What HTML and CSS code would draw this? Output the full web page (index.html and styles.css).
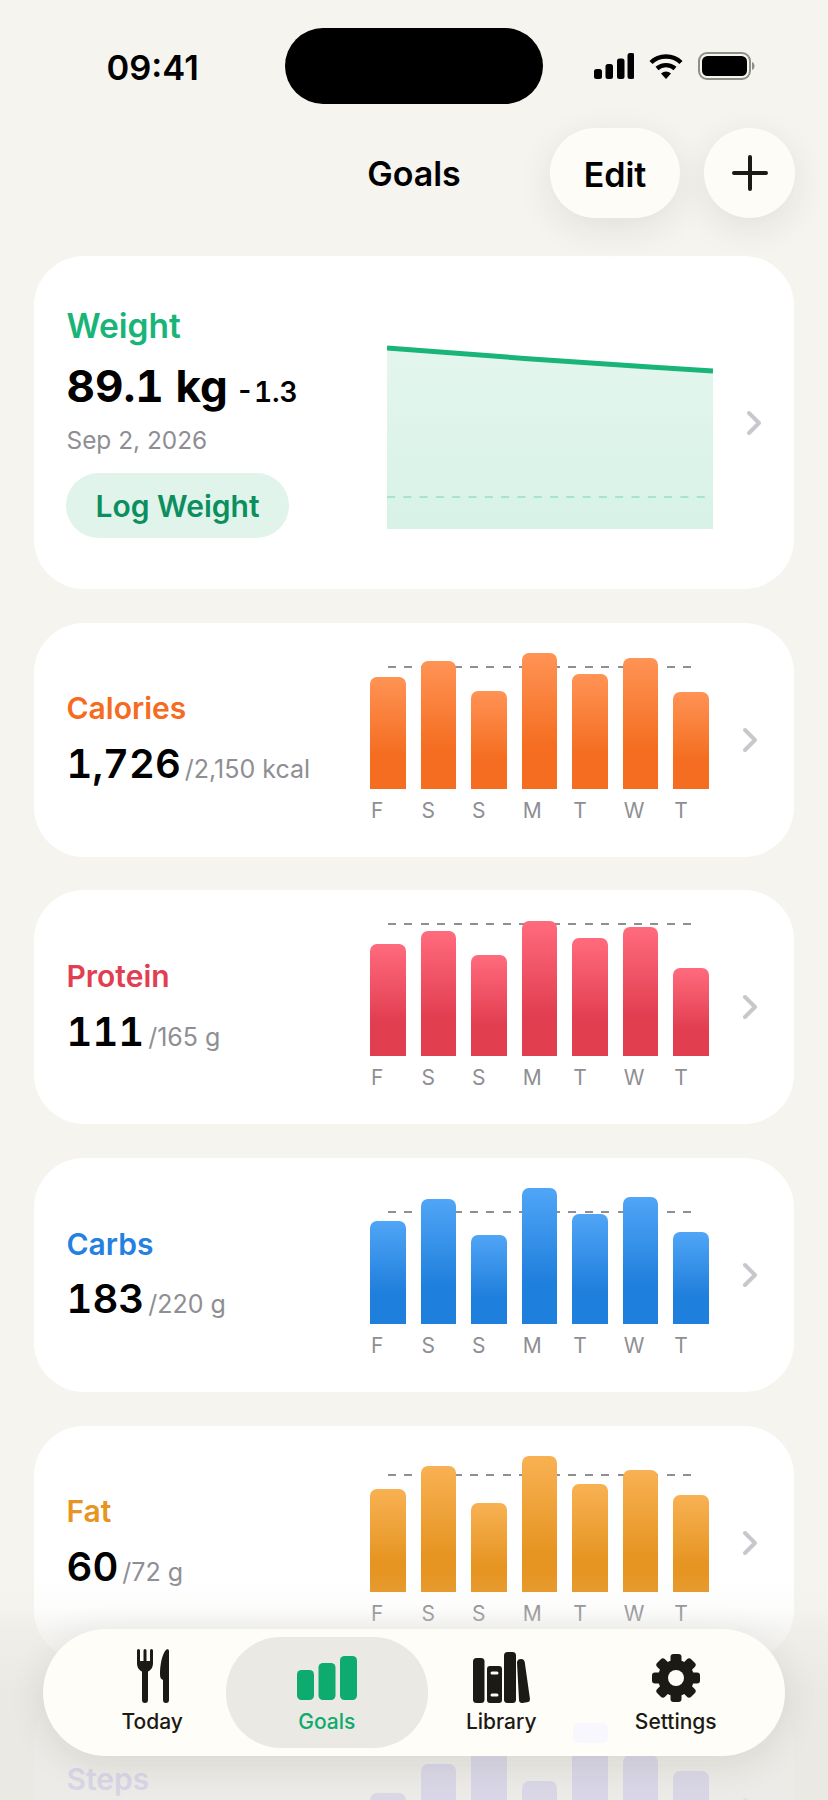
FILE: index.html
```html
<!DOCTYPE html>
<html lang="en">
<head>
<meta charset="utf-8">
<title>Goals</title>
<link rel="stylesheet" href="styles.css">
</head>
<body>
<div class="phone">
  <div class="status">
    <div class="time">09:41</div>
    <div class="island"></div>
    <div class="sys">
      <svg class="signal" width="40" height="26" viewBox="0 0 40 26"><rect x="0" y="16" width="8" height="10" rx="2.5"/><rect x="11.5" y="11" width="7.5" height="15" rx="2.5"/><rect x="23" y="5.5" width="7.5" height="20.5" rx="2.5"/><rect x="33.5" y="0" width="7" height="26" rx="2.5"/></svg>
      <svg class="wifi" width="34" height="26" viewBox="0 0 34 26"><path class="arc" d="M2 9.5C10 1.5 24 1.5 32 9.5"/><path class="arc" d="M8 15.5C13 11 21 11 26 15.5"/><path d="M12 20.5C15 17.8 19 17.8 22 20.5L17 26Z"/></svg>
      <svg class="battery" width="57" height="28" viewBox="0 0 57 28"><rect class="shell" x="1" y="1" width="51" height="26" rx="8"/><rect x="4" y="4" width="45" height="20" rx="5.5"/><path class="cap" d="M54 10C56 11 56.5 12.5 56.5 14S56 17 54 18Z"/></svg>
    </div>
  </div>

  <header class="top">
    <div></div>
    <h1 class="title">Goals</h1>
    <div class="actions">
      <button class="pill-btn">Edit</button>
      <button class="round-btn"><svg width="36" height="36" viewBox="0 0 36 36"><path d="M18 2V34M2 18H34"/></svg></button>
    </div>
  </header>

  <main class="list">
    <section class="card card-weight">
      <div class="w-left">
        <div class="label label-w c-green">Weight</div>
        <div class="w-value"><span class="big">89.1 kg</span><span class="delta">-1.3</span></div>
        <div class="date">Sep 2, 2026</div>
        <button class="log-btn">Log Weight</button>
      </div>
      <svg class="w-chart" width="326" height="190" viewBox="0 0 326 190">
        <defs><linearGradient id="wfill" x1="0" y1="0" x2="0" y2="1"><stop offset="0" stop-color="#e3f6ee"/><stop offset="1" stop-color="#d8f2e7"/></linearGradient></defs>
        <path fill="url(#wfill)" d="M0 6L141 16.700L263 25L326 29V187H0Z"/>
        <path class="w-goal" d="M0 155H322"/>
        <path class="w-line" d="M0 6L141 16.700L263 25L326 29"/>
      </svg>
      <svg class="chev chev-w" width="16" height="26" viewBox="0 0 16 26"><path d="M3 3L13 13L3 23"/></svg>
    </section>

    <section class="card">
      <div class="left">
        <div class="label c-orange">Calories</div>
        <div class="val"><span class="num">1,726</span><span class="of">/2,150 kcal</span></div>
      </div>
      <div class="chart">
        <div class="plot b-orange">
          <i class="goal" style="bottom:121px"></i>
          <b style="height:112px"></b><b style="height:128px"></b><b style="height:98px"></b><b style="height:136px"></b><b style="height:115px"></b><b style="height:131px"></b><b style="height:97px"></b>
        </div>
        <div class="days"><span>F</span><span>S</span><span>S</span><span>M</span><span>T</span><span>W</span><span>T</span></div>
      </div>
      <svg class="chev" width="16" height="26" viewBox="0 0 16 26"><path d="M3 3L13 13L3 23"/></svg>
    </section>

    <section class="card">
      <div class="left">
        <div class="label c-red">Protein</div>
        <div class="val"><span class="num">111</span><span class="of">/165 g</span></div>
      </div>
      <div class="chart">
        <div class="plot b-red">
          <i class="goal" style="bottom:131px"></i>
          <b style="height:112px"></b><b style="height:125px"></b><b style="height:101px"></b><b style="height:135px"></b><b style="height:118px"></b><b style="height:129px"></b><b style="height:88px"></b>
        </div>
        <div class="days"><span>F</span><span>S</span><span>S</span><span>M</span><span>T</span><span>W</span><span>T</span></div>
      </div>
      <svg class="chev" width="16" height="26" viewBox="0 0 16 26"><path d="M3 3L13 13L3 23"/></svg>
    </section>

    <section class="card">
      <div class="left">
        <div class="label c-blue">Carbs</div>
        <div class="val"><span class="num">183</span><span class="of">/220 g</span></div>
      </div>
      <div class="chart">
        <div class="plot b-blue">
          <i class="goal" style="bottom:111px"></i>
          <b style="height:103px"></b><b style="height:125px"></b><b style="height:89px"></b><b style="height:136px"></b><b style="height:110px"></b><b style="height:127px"></b><b style="height:92px"></b>
        </div>
        <div class="days"><span>F</span><span>S</span><span>S</span><span>M</span><span>T</span><span>W</span><span>T</span></div>
      </div>
      <svg class="chev" width="16" height="26" viewBox="0 0 16 26"><path d="M3 3L13 13L3 23"/></svg>
    </section>

    <section class="card">
      <div class="left">
        <div class="label c-amber">Fat</div>
        <div class="val"><span class="num">60</span><span class="of">/72 g</span></div>
      </div>
      <div class="chart">
        <div class="plot b-amber">
          <i class="goal" style="bottom:116px"></i>
          <b style="height:103px"></b><b style="height:126px"></b><b style="height:89px"></b><b style="height:136px"></b><b style="height:108px"></b><b style="height:122px"></b><b style="height:97px"></b>
        </div>
        <div class="days"><span>F</span><span>S</span><span>S</span><span>M</span><span>T</span><span>W</span><span>T</span></div>
      </div>
      <svg class="chev" width="16" height="26" viewBox="0 0 16 26"><path d="M3 3L13 13L3 23"/></svg>
    </section>

    <section class="card">
      <div class="left">
        <div class="label c-purple">Steps</div>
        <div class="val"></div>
      </div>
      <div class="chart">
        <div class="plot b-purple">
          <b style="height:66px"></b><b style="height:95px"></b><b style="height:110px"></b><b style="height:78px"></b><b style="height:136px"></b><b style="height:104px"></b><b style="height:88px"></b>
        </div>
      </div>
      <svg class="chev" width="16" height="26" viewBox="0 0 16 26"><path d="M3 3L13 13L3 23"/></svg>
    </section>
  </main>

  <div class="fade"></div>

  <nav class="tabs">
    <div class="ghost"></div>
    <a class="tab">
      <span class="ico ico-today">
        <svg width="32" height="54" viewBox="0 0 32 54"><path d="M0 1.500a1.500 1.500 0 0 1 3 0V12h3.500V1.500a1.500 1.500 0 0 1 3 0V12H13V1.500a1.500 1.500 0 0 1 3 0V14C16 18.500 14 21 11 22.500V51a3 3 0 0 1-6 0V22.500C2 21 0 18.500 0 14Z"/><path d="M32 2C32 0 30 -.5 28.800 1C25 5.500 23 16 23 25C23 29 24 30 26 31V51a3 3 0 0 0 6 0Z"/></svg>
      </span>
      <span class="tab-label">Today</span>
    </a>
    <a class="tab active">
      <span class="ico ico-goals">
        <svg width="60" height="44" viewBox="0 0 60 44"><rect x="0" y="14" width="17" height="30" rx="4.500"/><rect x="21.500" y="7" width="17" height="37" rx="4.500"/><rect x="43" y="0" width="17" height="44" rx="4.500"/></svg>
      </span>
      <span class="tab-label">Goals</span>
    </a>
    <a class="tab">
      <span class="ico">
        <svg width="57" height="51" viewBox="0 0 57 51"><rect x="0" y="6" width="11.500" height="45" rx="3.500"/><path fill-rule="evenodd" d="M17 14h9a3 3 0 0 1 3 3v31a3 3 0 0 1-3 3h-9a3 3 0 0 1-3-3V17a3 3 0 0 1 3-3ZM19 19.500a1.500 1.500 0 0 0 0 3h5a1.500 1.500 0 0 0 0-3ZM19 41.500a1.500 1.500 0 0 0 0 3h5a1.500 1.500 0 0 0 0-3Z"/><rect x="31" y="0" width="12" height="51" rx="3.500"/><path d="M44 10.500C44 8 46 7 48 7C50.500 7 51.500 8.500 51.800 10.500L56.900 46.500C57.200 48.800 56 50 54 50.300L49.500 50.900C47.500 51.200 46 50 46 48Z"/></svg>
      </span>
      <span class="tab-label">Library</span>
    </a>
    <a class="tab">
      <span class="ico">
        <svg class="gear" width="50" height="50" viewBox="0 0 50 50">
          <rect class="tooth" x="19.500" y="1" width="11" height="13" rx="3"/>
          <rect class="tooth" x="19.500" y="1" width="11" height="13" rx="3" transform="rotate(45 25 25)"/>
          <rect class="tooth" x="19.500" y="1" width="11" height="13" rx="3" transform="rotate(90 25 25)"/>
          <rect class="tooth" x="19.500" y="1" width="11" height="13" rx="3" transform="rotate(135 25 25)"/>
          <rect class="tooth" x="19.500" y="1" width="11" height="13" rx="3" transform="rotate(180 25 25)"/>
          <rect class="tooth" x="19.500" y="1" width="11" height="13" rx="3" transform="rotate(225 25 25)"/>
          <rect class="tooth" x="19.500" y="1" width="11" height="13" rx="3" transform="rotate(270 25 25)"/>
          <rect class="tooth" x="19.500" y="1" width="11" height="13" rx="3" transform="rotate(315 25 25)"/>
          <circle cx="25" cy="25" r="18"/>
          <circle class="hole" cx="25" cy="25" r="8"/>
        </svg>
      </span>
      <span class="tab-label">Settings</span>
    </a>
  </nav>
</div>
</body>
</html>
```
FILE: styles.css
```css
* { box-sizing: border-box; }
html, body { margin: 0; padding: 0; }
body { font-family: Inter, "Noto Sans", sans-serif; background: #f5f4ef; color: #000; }

.phone { position: relative; width: 828px; height: 1800px; overflow: hidden; background: #f5f4ef; }

/* status bar */
.status { display: flex; align-items: center; height: 128px; padding-bottom: 24px; padding-top: 28px; }
.time { width: 285px; padding-left: 106.5px; padding-top: 4px; font-size: 34.5px; font-weight: 600; line-height: 40px; }
.island { width: 258px; height: 76px; border-radius: 38px; background: #000; }
.sys { display: flex; align-items: center; margin-left: 51px; }
.signal { margin-right: 15px; }
.wifi { margin-right: 15px; }
.wifi .arc { fill: none; stroke: #000; stroke-width: 4.4px; }
.battery .shell { fill: none; stroke: #8f8f8a; stroke-width: 2px; }
.battery .cap { fill: #8f8f8a; }

/* header */
.top { display: grid; grid-template-columns: 1fr auto 1fr; align-items: center; height: 90px; position: relative; z-index: 2; }
.title { margin: 0; padding-top: 2px; font-size: 34px; font-weight: 600; line-height: 40px; }
.actions { display: flex; justify-content: flex-end; gap: 24px; padding-right: 33px; }
.pill-btn, .round-btn { border: 0; height: 90px; background: #fefcf6; color: #000; font: 600 34px Inter, sans-serif; box-shadow: 0 10px 36px rgba(40, 36, 20, .09); padding: 2px 0 0; }
.pill-btn { width: 130px; border-radius: 45px; }
.round-btn { width: 91px; border-radius: 50%; display: flex; align-items: center; justify-content: center; padding: 0; }
.round-btn path { stroke: #1c1a14; stroke-width: 4px; stroke-linecap: round; fill: none; }

/* list */
.list { display: flex; flex-direction: column; gap: 33.67px; padding: 37.5px 34px 0; }
.card { flex: none; display: flex; align-items: center; height: 234px; padding-left: 32.5px; border-radius: 50px; background: #fff; }
.label { font-size: 30px; font-weight: 600; line-height: 36px; }
.label-w { font-size: 33.5px; }
.c-green { color: #19b478; }
.c-orange { color: #f56b1f; }
.c-red { color: #e23e52; }
.c-blue { color: #2481df; }
.c-amber { color: #e69522; }
.c-purple { color: #8477ff; }

.left { width: 303.5px; }
.val { display: flex; align-items: baseline; margin-top: 12.5px; height: 50px; line-height: 50px; font-variant-numeric: tabular-nums; }
.num { font-size: 40px; font-weight: 600; }
.of { font-size: 25px; color: #8e8e93; margin-left: 4px; font-variant-numeric: normal; }

.chart { width: 360px; height: 182px; }
.plot { position: relative; display: flex; align-items: flex-end; gap: 14.9px; height: 140px; }
.plot b { position: relative; width: 35.67px; border-radius: 7px 7px 0 0; }
.goal { position: absolute; left: 17.7px; width: 304px; height: 2px; background: repeating-linear-gradient(to right, #8e8e93 0 8px, transparent 8px 16.4px); }
.b-orange b { background: linear-gradient(#ff9355, #f46d20 70%); }
.b-red b { background: linear-gradient(#ff6b7d, #e13e50 70%); }
.b-blue b { background: linear-gradient(#50a5f6, #1f7fdc 70%); }
.b-amber b { background: linear-gradient(#f8b153, #e69522 70%); }
.b-purple b { background: linear-gradient(#9186ff, #8477ff 70%); }
.days { display: flex; gap: 14.9px; height: 44px; line-height: 44px; font-size: 21px; color: #8e8e93; }
.days span { width: 35.67px; padding-left: 1px; }

.chev { flex: none; margin-left: 12px; }
.chev path { fill: none; stroke: #c7c7cc; stroke-width: 4px; stroke-linecap: round; stroke-linejoin: round; }
.chev-w { margin-left: 33px; margin-top: 1px; }

/* weight card */
.card-weight { height: 333.5px; }
.w-left { align-self: flex-start; width: 320.5px; padding-top: 52.5px; }
.w-value { display: flex; align-items: baseline; gap: 8px; margin-top: 15px; height: 54px; line-height: 54px; white-space: nowrap; font-variant-numeric: tabular-nums; }
.big { font-size: 44px; font-weight: 700; }
.delta { font-size: 28px; font-weight: 600; }
.date { margin-top: 11px; font-size: 24.4px; line-height: 32px; color: #8e8e93; }
.log-btn { display: block; margin: 17px 0 0 -.5px; width: 223px; height: 65px; border: 0; padding: 0; border-radius: 33px; background: #e0f4ec; color: #0c8f5e; font: 600 30px Inter, sans-serif; }
.w-chart { flex: none; align-self: flex-start; margin-top: 86.500px; }
.w-line { fill: none; stroke: #19b478; stroke-width: 5px; }
.w-goal { fill: none; stroke: #a8e3cc; stroke-width: 2px; stroke-dasharray: 8 8.300; }

/* fade under tab bar */
.fade { position: absolute; left: 0; right: 0; bottom: 0; height: 228px; z-index: 1; pointer-events: none; background: linear-gradient(rgba(232, 231, 226, 0), rgba(232, 231, 226, .12) 36px, rgba(232, 231, 226, .45) 58px, rgba(232, 231, 226, .84) 120px, rgba(232, 231, 226, .84)); }

/* tab bar */
.tabs { position: absolute; left: 43px; top: 1629px; z-index: 3; width: 742px; height: 127px; padding: 8px 22px; display: grid; grid-template-columns: repeat(4, 1fr); border-radius: 63.500px; background: #fefdf8; box-shadow: 0 8px 36px rgba(40, 36, 20, .1); }
.tab { position: relative; display: flex; flex-direction: column; align-items: center; height: 111px; padding-top: 12px; color: #1c1a14; }
.tab svg { fill: #1c1a14; }
.tab.active { margin: 0 -13.500px; border-radius: 55px; background: #eae9e4; color: #0dab6d; }
.tab.active svg { fill: #0dab6d; }
.ico { display: flex; align-items: flex-end; justify-content: center; height: 54px; }
.ico-today { padding-left: 1px; }
.ico-goals { padding: 0 0 3px 1px; }
.tab-label { margin-top: 7px; font-size: 21px; font-weight: 500; line-height: 24px; }
.gear .hole { fill: #fefdf8; }
.ghost { position: absolute; left: 530px; top: 94px; width: 35px; height: 20px; border-radius: 6px; background: #f8f7fe; }
```
